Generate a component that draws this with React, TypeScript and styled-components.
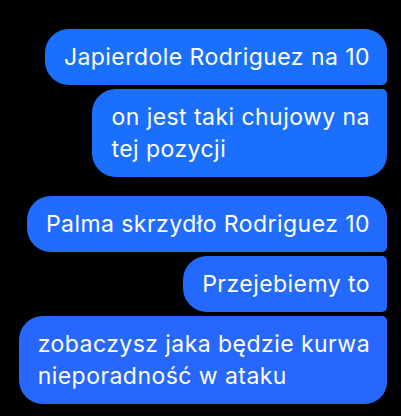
import React from "react";
import styled, { createGlobalStyle } from "styled-components";

const Global = createGlobalStyle`
  html, body { margin: 0; padding: 0; background: #000; }
  body { font-family: Inter, "Noto Sans", "Liberation Sans", sans-serif; }
`;

const Screen = styled.div`
  width: 401px;
  height: 416px;
  background: #000;
  box-sizing: border-box;
  padding: 29px 14px 0 0;
  display: flex;
  flex-direction: column;
  align-items: flex-end;
  gap: 19px;
  overflow: hidden;
`;

const Group = styled.div`
  display: flex;
  flex-direction: column;
  align-items: flex-end;
  gap: 4px;
`;

type Pos = "first" | "middle" | "last";

const radii: Record<Pos, string> = {
  first: "24px 22px 5px 24px",
  middle: "24px 5px 5px 24px",
  last: "24px 5px 22px 24px",
};

const Bubble = styled.div<{ $pos: Pos; $tone: string }>`
  background: ${(p) => p.$tone};
  color: #fff;
  font-size: 23px;
  line-height: 32px;
  letter-spacing: 0.45px;
  padding: 12px 17px 12px 19px;
  border-radius: ${(p) => radii[p.$pos]};
  white-space: nowrap;
  width: fit-content;
`;

export default function App() {
  return (
    <>
      <Global />
      <Screen>
        <Group>
          <Bubble $pos="first" $tone="#1b6ffd">Japierdole Rodriguez na 10</Bubble>
          <Bubble $pos="last" $tone="#1b6ffd">
            on jest taki chujowy na
            <br />
            tej pozycji
          </Bubble>
        </Group>
        <Group>
          <Bubble $pos="first" $tone="#216bfd">Palma skrzydło Rodriguez 10</Bubble>
          <Bubble $pos="middle" $tone="#2369fd">Przejebiemy to</Bubble>
          <Bubble $pos="last" $tone="#2767fc">
            zobaczysz jaka będzie kurwa
            <br />
            nieporadność w ataku
          </Bubble>
        </Group>
      </Screen>
    </>
  );
}
